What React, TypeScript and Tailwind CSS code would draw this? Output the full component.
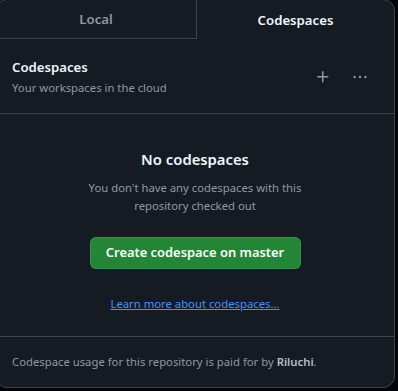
export default function App() {
  return (
    <div className="h-[391px] w-[398px] overflow-hidden bg-[#010409] font-['Noto_Sans',sans-serif]">
      <div className="-ml-[5px] -mt-px h-[389px] w-[400px] overflow-hidden rounded-xl border border-[#3d444d] bg-[#151b23]">
        {/* tabs */}
        <div className="flex h-[39px]">
          <div className="flex w-[201px] items-center justify-center border-r border-b border-[#3d444d] pt-[2px] text-[13.2px] font-semibold text-[#9198a1]">
            Local
          </div>
          <div className="flex flex-1 items-center justify-center pt-[2px] text-[13.2px] font-semibold text-[#f0f6fc]">
            Codespaces
          </div>
        </div>

        {/* header */}
        <div className="flex h-[75px] items-center border-b border-[#3d444d] pr-[26px] pl-[16px]">
          <div className="flex-1">
            <div className="text-[13.2px] leading-5 font-semibold text-[#f0f6fc]">Codespaces</div>
            <div className="mt-[3px] text-[11.3px] leading-4 text-[#9198a1]">Your workspaces in the cloud</div>
          </div>
          <div className="flex items-center gap-[21px] pt-[2px] text-[#9198a1]">
            <svg width="16" height="16" viewBox="0 0 16 16" fill="currentColor">
              <path d="M7.75 2a.75.75 0 0 1 .75.75V7h4.25a.75.75 0 0 1 0 1.5H8.5v4.25a.75.75 0 0 1-1.5 0V8.5H2.75a.75.75 0 0 1 0-1.5H7V2.75A.75.75 0 0 1 7.75 2Z" />
            </svg>
            <svg width="16" height="16" viewBox="0 0 16 16" fill="currentColor">
              <circle cx="2.5" cy="8" r="1.2" />
              <circle cx="8" cy="8" r="1.2" />
              <circle cx="13.5" cy="8" r="1.2" />
            </svg>
          </div>
        </div>

        {/* empty state */}
        <div className="flex h-[223px] flex-col items-center border-b border-[#3d444d] pt-[33px]">
          <div className="text-[14.8px] leading-6 font-semibold text-[#f0f6fc]">No codespaces</div>
          <div className="mt-[8px] w-[230px] text-center text-[11.3px] leading-[18px] text-[#9198a1]">
            You don't have any codespaces with this repository checked out
          </div>
          <button className="mt-[22px] h-[32px] w-[211px] rounded-md border border-[#ffffff1a] bg-[#238636] text-[12.9px] font-semibold text-white">
            Create codespace on master
          </button>
          <a className="mt-[27px] text-[11.3px] text-[#4493f8] underline" href="#">
            Learn more about codespaces...
          </a>
        </div>

        {/* footer */}
        <div className="flex h-[51px] items-center pl-[16px] text-[11.3px] text-[#9198a1]">
          <span>
            Codespace usage for this repository is paid for by{" "}
            <span className="font-semibold text-[#b7bdc8]">Riluchi</span>.
          </span>
        </div>
      </div>
    </div>
  );
}
